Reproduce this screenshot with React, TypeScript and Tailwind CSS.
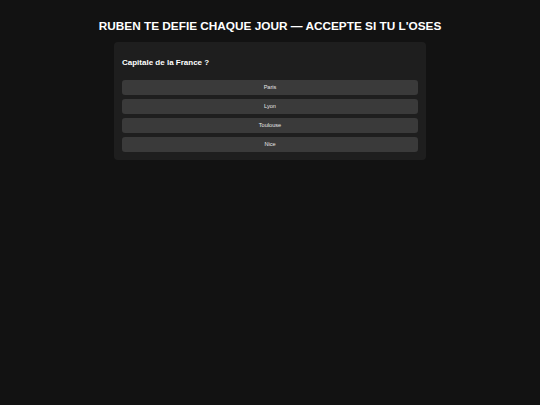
import React from "react";

const options = ["Paris", "Lyon", "Toulouse", "Nice"];

export default function App() {
  return (
    <div className="min-h-screen w-full bg-[#121212] text-white font-['Liberation_Sans',Arial,sans-serif]">
      <h1 className="pt-[20px] text-center text-[11.8px] font-bold leading-[13px]">
        RUBEN TE DEFIE CHAQUE JOUR — ACCEPTE SI TU L'OSES
      </h1>
      <div className="mx-auto mt-[9px] w-[312px] rounded-[4px] bg-[#1e1e1e] px-[8px] pt-[16px] pb-[8px]">
        <h2 className="text-[8px] font-bold leading-[10px]">Capitale de la France ?</h2>
        <div className="mt-[12px] flex flex-col gap-[4px]">
          {options.map((o) => (
            <button
              key={o}
              className="h-[15px] w-full rounded-[3px] bg-[#3a3a3a] text-[5.6px] leading-[15px] text-[#e5e5e5]"
            >
              {o}
            </button>
          ))}
        </div>
      </div>
    </div>
  );
}
